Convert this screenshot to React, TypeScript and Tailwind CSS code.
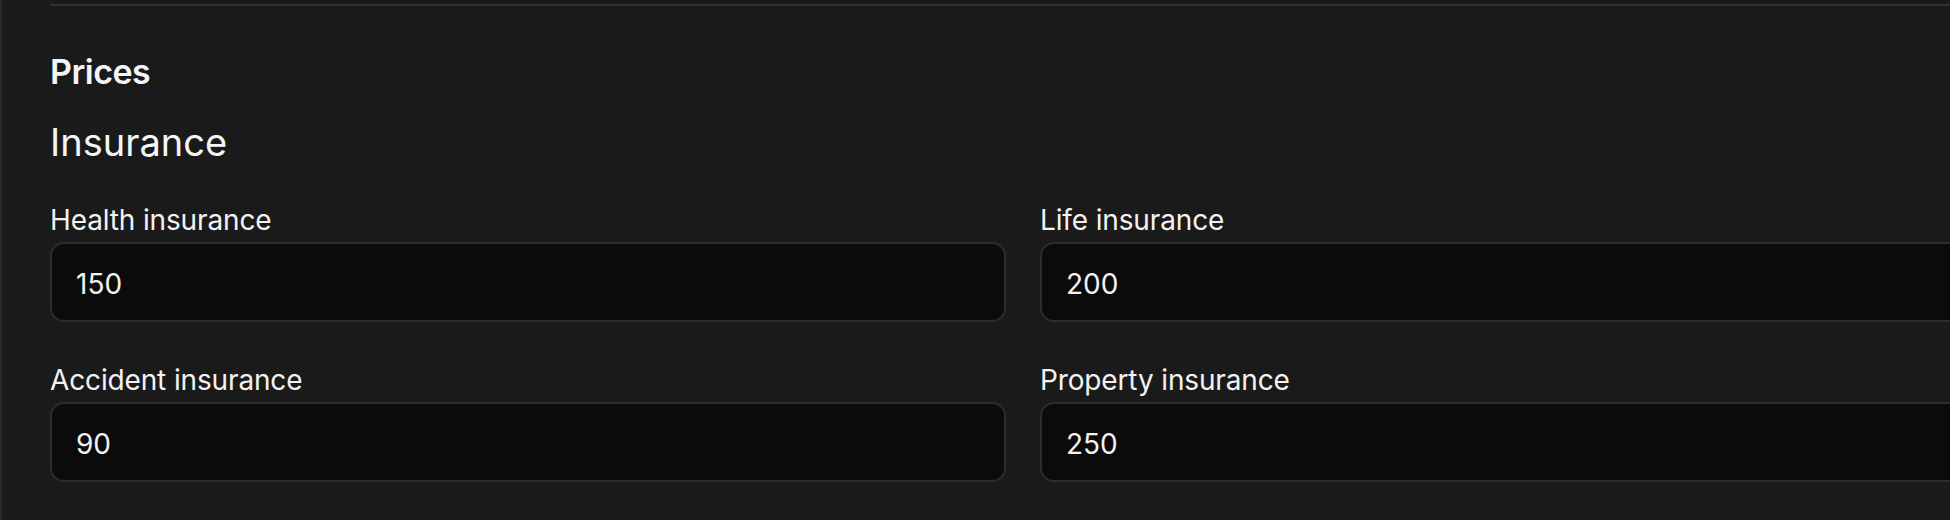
import React from "react";

type PriceField = { label: string; value: string };

const fields: PriceField[] = [
  { label: "Health insurance", value: "150" },
  { label: "Life insurance", value: "200" },
  { label: "Accident insurance", value: "90" },
  { label: "Property insurance", value: "250" },
];

function PriceInput({ label, value }: PriceField) {
  return (
    <label className="flex flex-col">
      <span className="text-[28px] leading-[34px] tracking-[-0.005em] text-[#f2f2f2]">{label}</span>
      <input
        type="text"
        defaultValue={value}
        className="mt-[5px] h-[80px] w-full rounded-[14px] border-2 border-[#2c2c2c] bg-[#0b0b0b] px-[24px] pt-[4px] text-[28px] text-[#f2f2f2] outline-none"
      />
    </label>
  );
}

export default function App() {
  return (
    <div
      className="h-[520px] w-[1950px] overflow-hidden border-l-2 border-[#2a2a2a] bg-[#1a1a1a]"
      style={{ fontFamily: "Inter, 'Noto Sans', sans-serif" }}
    >
      <div className="pl-[48px] pt-[4px]">
        <div className="border-t-2 border-[#323232]" />

        <h2 className="mt-[46px] text-[34px] font-semibold leading-[40px] tracking-[-0.015em] text-[#f5f5f5]">
          Prices
        </h2>
        <h3 className="mt-[27px] text-[38px] font-normal leading-[46px] text-[#f5f5f5]">Insurance</h3>

        <div className="mt-[38px] grid w-[1946px] grid-cols-[956px_956px] gap-x-[34px] gap-y-[41px]">
          {fields.map((f) => (
            <PriceInput key={f.label} {...f} />
          ))}
        </div>
      </div>
    </div>
  );
}
